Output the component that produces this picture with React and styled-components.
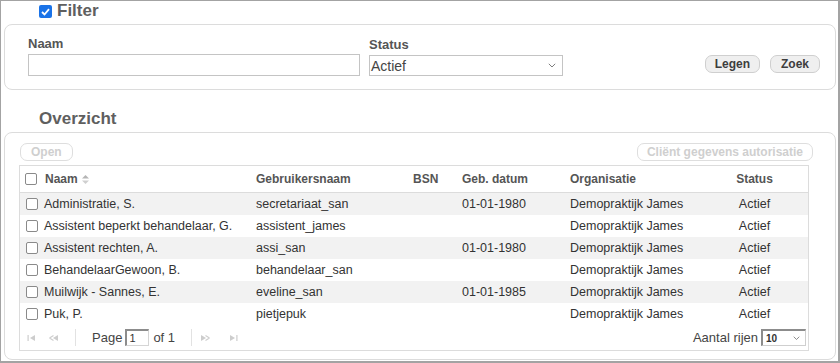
import React from 'react';
import styled, { createGlobalStyle } from 'styled-components';

const GlobalStyle = createGlobalStyle`
    body {
        margin: 0;
        font-family: "Liberation Sans", Arial, sans-serif;
        background: #fff;
    }
`;

const Frame = styled.div`
    width: 840px;
    height: 363px;
    box-sizing: border-box;
    border-style: solid;
    border-color: #a3a3a3;
    border-width: 1px 2px 2px 1px;
    padding: 0 2px 0 3px;
    overflow: hidden;
`;

const Heading = styled.div`
    display: flex;
    align-items: center;
    gap: 5px;
    height: 20px;
    padding-left: 35px;
    margin: ${p => p.$top || 0}px 0 3px 0;
    font-size: 17px;
    font-weight: bold;
    color: #5f5f5f;
    line-height: 20px;
`;

const BlueCheck = styled.span`
    width: 13px;
    height: 13px;
    border-radius: 2px;
    background: #1a73e8;
    display: flex;
    align-items: center;
    justify-content: center;
    margin-top: 1px;
`;

const Panel = styled.div`
    border: 1px solid #dcdcdc;
    border-radius: 8px;
    box-sizing: border-box;
    height: ${p => p.$h}px;
    padding: ${p => p.$pad};
`;

const FilterRow = styled.div`
    display: flex;
    align-items: flex-end;
`;

const Field = styled.div`
    display: flex;
    flex-direction: column;
    width: ${p => p.$w}px;
`;

const Label = styled.label`
    font-size: 13px;
    font-weight: bold;
    color: #555;
    height: 18px;
    line-height: 16px;
`;

const TextInput = styled.div`
    width: ${p => p.$w}px;
    height: 22px;
    box-sizing: border-box;
    border: 1px solid #c4c4c4;
    background: #fff;
`;

const Select = styled.div`
    width: ${p => p.$w}px;
    height: 21px;
    box-sizing: border-box;
    border: 1px solid #c4c4c4;
    display: flex;
    align-items: center;
    justify-content: space-between;
    padding: 0 6px 0 1px;
    font-size: 14px;
    color: #444;
`;

const Buttons = styled.div`
    margin-left: auto;
    display: flex;
    gap: 10px;
    padding-bottom: 3px;
`;

const Button = styled.div`
    height: 18px;
    box-sizing: border-box;
    padding: 0 ${p => p.$px || 9}px;
    border: 1px solid ${p => (p.$disabled ? '#dedede' : '#cfcfcf')};
    border-radius: 7px;
    background: ${p => (p.$disabled ? '#fff' : '#efefef')};
    color: ${p => (p.$disabled ? '#cfcfcf' : '#3d3d3d')};
    font-size: 12px;
    font-weight: bold;
    line-height: 16px;
    display: flex;
    align-items: center;
`;

const Toolbar = styled.div`
    display: flex;
    justify-content: space-between;
    padding-left: 1px;
    margin-bottom: 4px;
`;

const Grid = styled.div`
    width: 790px;
    border: 1px solid #dcdcdc;
    box-sizing: border-box;
`;

const cols = '232px 157px 49px 108px 131px 1fr';

const HeadRow = styled.div`
    display: grid;
    grid-template-columns: ${cols};
    height: 27px;
    box-sizing: border-box;
    border-bottom: 1px solid #dcdcdc;
    font-size: 12px;
    font-weight: bold;
    color: #555;
    align-items: center;
`;

const Row = styled.div`
    display: grid;
    grid-template-columns: ${cols};
    height: 22px;
    align-items: center;
    background: ${p => (p.$odd ? '#f2f2f2' : '#fff')};
    font-size: 12.5px;
    color: #333;
`;

const Cell = styled.div`
    padding-left: 4px;
    white-space: nowrap;
    text-align: ${p => (p.$center ? 'center' : 'left')};
    padding-right: ${p => (p.$center ? '0' : '4px')};
`;

const NameCell = styled.div`
    display: flex;
    align-items: center;
    gap: ${p => p.$gap}px;
    padding-left: ${p => p.$pl}px;
    white-space: nowrap;
`;

const Box = styled.span`
    width: 12px;
    height: 12px;
    box-sizing: border-box;
    border: 1.5px solid #8a8a8a;
    border-radius: 2px;
    background: #fff;
    flex: none;
`;

const SortWrap = styled.span`
    display: flex;
    margin-left: -4px;
`;

const Paging = styled.div`
    height: 25px;
    display: flex;
    align-items: center;
    padding: 0 0 0 7px;
    font-size: 13px;
    color: #444;
`;

const Sep = styled.span`
    width: 1px;
    height: 17px;
    background: #e2e2e2;
    margin: 0 ${p => p.$mr}px 0 ${p => p.$ml}px;
`;

const NavIcon = styled.svg`
    width: 10px;
    height: 8px;
    margin-right: ${p => p.$mr || 0}px;
`;

const PageInput = styled.span`
    width: 24px;
    height: 17px;
    box-sizing: border-box;
    border-style: solid;
    border-width: 2px 1px 1px 2px;
    border-color: #8c8c8c #d5d5d5 #d5d5d5 #8c8c8c;
    margin: 0 4px 0 3px;
    font-size: 11px;
    line-height: 14px;
    padding-left: 2px;
    color: #333;
`;

const RowsSelect = styled.span`
    width: 45px;
    height: 17px;
    box-sizing: border-box;
    border-style: solid;
    border-width: 2px 1px 1px 2px;
    border-color: #8c8c8c #cfcfcf #cfcfcf #8c8c8c;
    margin: 0 2px 0 3px;
    display: flex;
    align-items: center;
    justify-content: space-between;
    padding: 0 5px 0 3px;
    font-size: 10px;
    font-weight: bold;
    color: #333;
`;

const Right = styled.div`
    margin-left: auto;
    display: flex;
    align-items: center;
`;

const Chevron = ({ size = 8, color = '#777' }) => (
    <svg width={size} height={size * 0.6} viewBox="0 0 10 6">
        <path d="M1 1 L5 5 L9 1" fill="none" stroke={color} strokeWidth="1.2" />
    </svg>
);

const SortIcon = () => (
    <svg width="7" height="9" viewBox="0 0 7 9">
        <path d="M3.5 0 L7 3.5 L0 3.5 Z" fill="#b5b5b5" />
        <path d="M0 5.5 L7 5.5 L3.5 9 Z" fill="#cfcfcf" />
    </svg>
);

const rows = [
    ['Administratie, S.', 'secretariaat_san', '', '01-01-1980'],
    ['Assistent beperkt behandelaar, G.', 'assistent_james', '', ''],
    ['Assistent rechten, A.', 'assi_san', '', '01-01-1980'],
    ['BehandelaarGewoon, B.', 'behandelaar_san', '', ''],
    ['Muilwijk - Sannes, E.', 'eveline_san', '', '01-01-1985'],
    ['Puk, P.', 'pietjepuk', '', ''],
];

const nav = '#cdcdcd';

function App() {
    return (
        <>
            <GlobalStyle />
            <Frame>
                <Heading>
                    <BlueCheck>
                        <svg width="9" height="8" viewBox="0 0 9 8">
                            <path d="M1 4 L3.5 6.5 L8 1.2" fill="none" stroke="#fff" strokeWidth="1.8" />
                        </svg>
                    </BlueCheck>
                    Filter
                </Heading>
                <Panel $h={66} $pad="11px 15px 0 23px">
                    <FilterRow>
                        <Field $w={341}>
                            <Label>Naam</Label>
                            <TextInput $w={332} />
                        </Field>
                        <Field $w={200}>
                            <Label>Status</Label>
                            <Select $w={194}>
                                Actief
                                <Chevron />
                            </Select>
                        </Field>
                        <Buttons>
                            <Button>Legen</Button>
                            <Button $px={10}>Zoek</Button>
                        </Buttons>
                    </FilterRow>
                </Panel>

                <Heading $top={19}>Overzicht</Heading>
                <Panel $h={228} $pad="10px 22px 0 14px">
                    <Toolbar>
                        <Button $disabled $px={10}>Open</Button>
                        <Button $disabled>Cliënt gegevens autorisatie</Button>
                    </Toolbar>
                    <Grid>
                        <HeadRow>
                            <NameCell $pl={5} $gap={8}>
                                <Box />
                                Naam
                                <SortWrap><SortIcon /></SortWrap>
                            </NameCell>
                            <Cell>Gebruikersnaam</Cell>
                            <Cell>BSN</Cell>
                            <Cell>Geb. datum</Cell>
                            <Cell>Organisatie</Cell>
                            <Cell $center>Status</Cell>
                        </HeadRow>
                        {rows.map((r, i) => (
                            <Row key={r[1]} $odd={i % 2 === 0}>
                                <NameCell $pl={6} $gap={6}>
                                    <Box />
                                    {r[0]}
                                </NameCell>
                                <Cell>{r[1]}</Cell>
                                <Cell>{r[2]}</Cell>
                                <Cell>{r[3]}</Cell>
                                <Cell>Demopraktijk James</Cell>
                                <Cell $center>Actief</Cell>
                            </Row>
                        ))}
                        <Paging>
                            <NavIcon viewBox="0 0 10 8" $mr={12}>
                                <rect x="0.5" y="1" width="1.2" height="6" fill={nav} />
                                <path d="M3 4 L8 1 L8 7 Z" fill={nav} />
                            </NavIcon>
                            <NavIcon viewBox="0 0 10 8">
                                <path d="M0.5 4 L4.5 1.5 M0.5 4 L4.5 6.5" stroke={nav} strokeWidth="1.1" fill="none" />
                                <path d="M4 4 L9 1 L9 7 Z" fill={nav} />
                            </NavIcon>
                            <Sep $ml={16} $mr={16} />
                            Page
                            <PageInput>1</PageInput>
                            of 1
                            <Sep $ml={16} $mr={8} />
                            <NavIcon viewBox="0 0 10 8" $mr={18}>
                                <path d="M1 1 L6 4 L1 7 Z" fill={nav} />
                                <path d="M9.5 4 L5.5 1.5 M9.5 4 L5.5 6.5" stroke={nav} strokeWidth="1.1" fill="none" />
                            </NavIcon>
                            <NavIcon viewBox="0 0 10 8">
                                <path d="M2 1 L7 4 L2 7 Z" fill={nav} />
                                <rect x="8.3" y="1" width="1.2" height="6" fill={nav} />
                            </NavIcon>
                            <Right>
                                Aantal rijen
                                <RowsSelect>
                                    10
                                    <Chevron size={7} />
                                </RowsSelect>
                            </Right>
                        </Paging>
                    </Grid>
                </Panel>
            </Frame>
        </>
    );
}

export default App;
